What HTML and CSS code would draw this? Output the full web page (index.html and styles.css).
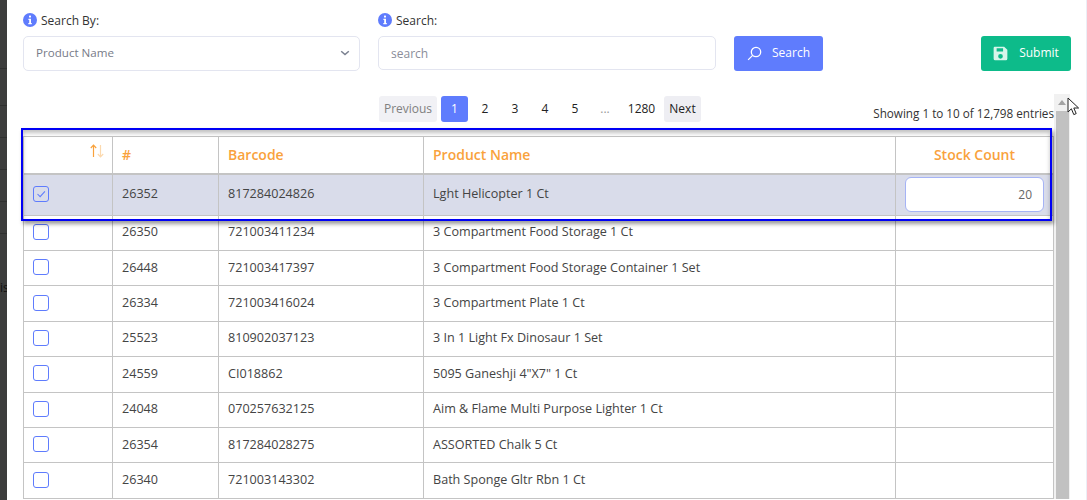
FILE: index.html
```html
<!DOCTYPE html>
<html>
<head>
  <title>Stock Count</title>
  <link rel="stylesheet" href="styles.css">
</head>
<body>
  <div class="backdrop">
    <div class="backdrop-row backdrop-row-tall"></div>
    <div class="backdrop-row backdrop-row-mid"></div>
    <div class="backdrop-row"></div>
    <div class="backdrop-row"></div>
    <div class="backdrop-row"></div>
    <div class="backdrop-row"></div>
    <span class="backdrop-text">is</span>
  </div>
  <div class="modal">
    <div class="filters">
      <div class="field field-by">
        <label class="field-label">
          <svg class="info-icon" viewBox="0 0 14 14"><circle cx="7" cy="7" r="7" fill="#5f7cfd"/><rect x="6" y="2.6" width="2" height="2" rx="0.6" fill="#fff"/><path d="M5.4 5.8H8v4.2h0.8v1.2H5.3V10h0.9V7H5.4z" fill="#fff"/></svg>
          Search By:
        </label>
        <div class="select-box">
          <span>Product Name</span>
          <svg class="chevron" viewBox="0 0 10 6"><path d="M1.2 1.2L5 4.6l3.8-3.4" fill="none" stroke="#7b8190" stroke-width="1.5"/></svg>
        </div>
      </div>
      <div class="field field-search">
        <label class="field-label">
          <svg class="info-icon" viewBox="0 0 14 14"><circle cx="7" cy="7" r="7" fill="#5f7cfd"/><rect x="6" y="2.6" width="2" height="2" rx="0.6" fill="#fff"/><path d="M5.4 5.8H8v4.2h0.8v1.2H5.3V10h0.9V7H5.4z" fill="#fff"/></svg>
          Search:
        </label>
        <div class="search-box">search</div>
      </div>
      <button class="btn btn-search">
        <svg class="btn-icon" viewBox="0 0 16 16"><circle cx="9.6" cy="6.4" r="5" fill="none" stroke="#fff" stroke-width="1.4"/><path d="M6 10L1.2 14.8" stroke="#fff" stroke-width="1.4"/></svg>
        <span class="btn-text">Search</span>
      </button>
      <button class="btn btn-submit">
        <svg class="btn-icon" viewBox="0 0 14 14"><path fill-rule="evenodd" d="M1.4 0.6H10.4L13.4 3.6V12a1.4 1.4 0 0 1-1.4 1.4H2A1.4 1.4 0 0 1 0.6 12V2A1.4 1.4 0 0 1 1.4 0.6zM3.4 2V5.2H9.4V2zM7 7.4a2.2 2.2 0 1 0 0 4.4 2.2 2.2 0 0 0 0-4.4z" fill="#d6f5ea"/></svg>
        <span class="btn-text">Submit</span>
      </button>
    </div>

    <div class="results">
      <div class="results-main">
        <div class="pager-row">
          <div class="pager">
            <span class="page page-prev">Previous</span>
            <span class="page page-active">1</span>
            <span class="page page-num">2</span>
            <span class="page page-num">3</span>
            <span class="page page-num">4</span>
            <span class="page page-num">5</span>
            <span class="page page-dots">...</span>
            <span class="page page-last">1280</span>
            <span class="page page-next">Next</span>
          </div>
          <div class="entries">Showing 1 to 10 of 12,798 entries</div>
        </div>

        <table class="stock-table">
          <thead>
            <tr class="head-row">
              <th class="col-check">
                <svg class="sort-icon" viewBox="0 0 16 14"><path d="M4.5 13V1.5M1.8 4L4.5 1.2 7.2 4" fill="none" stroke="#f9a23c" stroke-width="1.2"/><path d="M11.5 1V12.5M8.8 10L11.5 12.8 14.2 10" fill="none" stroke="#fcd9ae" stroke-width="1.2"/></svg>
              </th>
              <th class="col-id">#</th>
              <th class="col-barcode">Barcode</th>
              <th class="col-name">Product Name</th>
              <th class="col-stock">Stock Count</th>
            </tr>
          </thead>
          <tbody>
            <tr class="row-selected">
              <td><span class="check check-on"><svg viewBox="0 0 16 16"><path d="M4 8l3 3 5.5-6" fill="none" stroke="#5f7cfd" stroke-width="1.2"/></svg></span></td>
              <td>26352</td>
              <td>817284024826</td>
              <td>Lght Helicopter 1 Ct</td>
              <td class="stock-cell"><div class="stock-input">20</div></td>
            </tr>
            <tr><td><span class="check"></span></td><td>26350</td><td>721003411234</td><td>3 Compartment Food Storage 1 Ct</td><td></td></tr>
            <tr><td><span class="check"></span></td><td>26448</td><td>721003417397</td><td>3 Compartment Food Storage Container 1 Set</td><td></td></tr>
            <tr><td><span class="check"></span></td><td>26334</td><td>721003416024</td><td>3 Compartment Plate 1 Ct</td><td></td></tr>
            <tr><td><span class="check"></span></td><td>25523</td><td>810902037123</td><td>3 In 1 Light Fx Dinosaur 1 Set</td><td></td></tr>
            <tr><td><span class="check"></span></td><td>24559</td><td>CI018862</td><td>5095 Ganeshji 4"X7" 1 Ct</td><td></td></tr>
            <tr><td><span class="check"></span></td><td>24048</td><td>070257632125</td><td>Aim &amp; Flame Multi Purpose Lighter 1 Ct</td><td></td></tr>
            <tr><td><span class="check"></span></td><td>26354</td><td>817284028275</td><td>ASSORTED Chalk 5 Ct</td><td></td></tr>
            <tr><td><span class="check"></span></td><td>26340</td><td>721003143302</td><td>Bath Sponge Gltr Rbn 1 Ct</td><td></td></tr>
          </tbody>
        </table>
      </div>

      <div class="scrollbar">
        <span class="scroll-arrow"></span>
        <div class="scroll-thumb"></div>
      </div>
    </div>

    <div class="highlight-box"></div>
    <svg class="cursor" viewBox="0 0 14 20"><path d="M1 1V15L4.4 11.8 6.8 17.6 9.2 16.6 6.8 11H11.6z" fill="#fff" stroke="#222" stroke-width="1"/></svg>
  </div>
</body>
</html>
```

FILE: styles.css
```css
html, body {
  height: 100%;
}

body {
  margin: 0;
  height: 500px;
  display: flex;
  overflow: hidden;
  background-color: #ffffff;
  font-family: "Open Sans", sans-serif;
  font-size: 12px;
  color: #444444;
}

/* Page behind the modal */
.backdrop {
  width: 7px;
  flex-shrink: 0;
  background-color: #3c3d3c;
  position: relative;
  overflow: hidden;
}

.backdrop-row {
  height: 31px;
  border-bottom: 1px solid #2f302f;
}

.backdrop-row-tall {
  height: 68px;
}

.backdrop-row-mid {
  height: 36px;
}

.backdrop-text {
  position: absolute;
  top: 279px;
  left: 0;
  font-size: 12px;
  color: #111111;
}

.modal {
  flex: 1;
  position: relative;
  padding-left: 16px;
  background-color: #ffffff;
  border-right: 1px solid #eceef6;
}

/* Search row */
.filters {
  display: flex;
  align-items: flex-end;
  height: 71px;
}

.field-label {
  display: flex;
  align-items: center;
  gap: 4px;
  height: 16px;
  margin-bottom: 8px;
  font-size: 12px;
  color: #333333;
}

.info-icon {
  width: 14px;
  height: 14px;
}

.field-by {
  width: 337px;
  margin-right: 18px;
}

.field-search {
  width: 338px;
  margin-right: 18px;
}

.select-box,
.search-box {
  height: 35px;
  box-sizing: border-box;
  display: flex;
  align-items: center;
  justify-content: space-between;
  padding: 0 12px;
  border: 1px solid #e3e5f0;
  border-radius: 5px;
  color: #777b88;
}

.select-box {
  padding-bottom: 2px;
  font-size: 11.6px;
}

.search-box {
  height: 34px;
  margin-bottom: 1px;
  color: #8a8d99;
}

.chevron {
  width: 10px;
  height: 6px;
  margin-right: -3px;
}

.btn {
  height: 35px;
  border: none;
  border-radius: 3px;
  display: flex;
  align-items: center;
  justify-content: center;
  font-family: inherit;
  font-size: 12px;
  color: #ffffff;
}

.btn-text {
  margin-bottom: 2px;
}

.btn-icon {
  width: 15px;
  height: 15px;
}

.btn-search {
  width: 89px;
  gap: 10px;
  background-color: #5f7cfd;
}

.btn-submit {
  width: 90px;
  gap: 11px;
  margin-left: 158px;
  background-color: #0dbb8a;
}

/* Pager + table + scrollbar */
.results {
  display: flex;
  margin-top: 23px;
}

.results-main {
  width: 1031px;
}

.pager-row {
  height: 42px;
  display: flex;
  align-items: flex-start;
  padding-top: 2px;
  box-sizing: border-box;
  position: relative;
}

.pager {
  display: flex;
  margin-left: 356px;
}

.page {
  height: 26px;
  box-sizing: border-box;
  padding-bottom: 2px;
  display: flex;
  align-items: center;
  justify-content: center;
  border-radius: 3px;
  color: #222222;
}

.page-prev {
  width: 58px;
  margin-right: 4px;
  background-color: #f1f1f5;
  color: #808080;
}

.page-active {
  width: 27px;
  margin-right: 2px;
  background-color: #5f7cfd;
  color: #ffffff;
}

.page-num {
  width: 30px;
}

.page-dots {
  width: 30px;
  color: #999999;
}

.page-last {
  width: 43px;
}

.page-next {
  width: 37px;
  margin-left: 1px;
  background-color: #eeeef3;
}

.entries {
  margin-left: auto;
  padding-top: 9px;
  font-size: 11.7px;
  color: #333333;
}

.stock-table {
  width: 1031px;
  border-collapse: collapse;
  table-layout: fixed;
}

.stock-table th,
.stock-table td {
  border: 1px solid #c4c4c4;
  padding: 0 9px;
  text-align: left;
}

.stock-table td {
  height: 35.4px;
  box-sizing: border-box;
  padding-bottom: 2px;
  font-size: 12.6px;
}

.stock-table th {
  height: 37px;
  box-sizing: border-box;
  border-bottom: 2px solid #c4c4c4;
  font-size: 14px;
  font-weight: 600;
  color: #f9a23c;
}

.col-check {
  width: 89px;
  position: relative;
}

.col-id {
  width: 106px;
}

.col-barcode {
  width: 205px;
}

.col-name {
  width: 472px;
}

.stock-table .col-stock {
  text-align: center;
}

.sort-icon {
  position: absolute;
  top: 7px;
  right: 7px;
  width: 16px;
  height: 14px;
}

.stock-table .row-selected td {
  height: 41.6px;
  background-color: #d9dcea;
}

.stock-table .row-selected .stock-cell {
  padding-bottom: 1px;
}

.check {
  display: block;
  width: 16px;
  height: 16px;
  box-sizing: border-box;
  border: 1px solid #5f7cfd;
  border-radius: 3px;
  background-color: #ffffff;
}

.check-on {
  background-color: #d9dcea;
}

.check-on svg {
  display: block;
  width: 14px;
  height: 14px;
}

.stock-input {
  height: 35px;
  box-sizing: border-box;
  display: flex;
  align-items: center;
  justify-content: flex-end;
  padding-right: 11px;
  border: 1px solid #a5b3f5;
  border-radius: 6px;
  background-color: #ffffff;
  font-size: 12px;
  color: #666666;
}

.scrollbar {
  width: 16px;
  background-color: #f1f1f1;
  display: flex;
  flex-direction: column;
  align-items: center;
}

.scroll-arrow {
  margin-top: 6px;
  margin-bottom: 6px;
  border-left: 4px solid transparent;
  border-right: 4px solid transparent;
  border-bottom: 5px solid #a3a3a3;
}

.scroll-thumb {
  width: 13px;
  flex: 1;
  background-color: #c1c1c1;
}

/* Blue annotation drawn over the screenshot */
.highlight-box {
  position: absolute;
  left: 14px;
  top: 128px;
  width: 1027px;
  height: 89px;
  border: 2px solid #0000f5;
  box-shadow: 2px 3px 4px rgba(0, 0, 0, 0.4), inset 0 3px 4px rgba(0, 0, 0, 0.25);
}

.cursor {
  position: absolute;
  left: 1060px;
  top: 97px;
  width: 14px;
  height: 20px;
}
```
